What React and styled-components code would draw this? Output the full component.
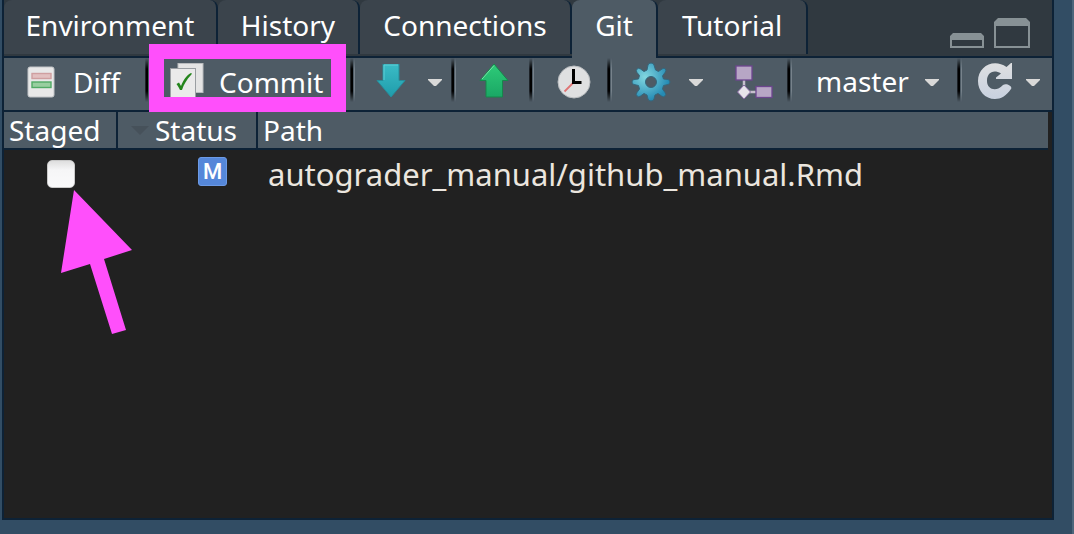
import React, { useState } from "react";
import styled, { createGlobalStyle } from "styled-components";

const line = "#0d2236";
const slate = "#4e5b65";
const pink = "#ff4ffb";

const GlobalStyle = createGlobalStyle`
  *, *::before, *::after { box-sizing: border-box; }
  body {
    margin: 0;
    background: #324d64;
    color: #fff;
    font-family: "Noto Sans", "Open Sans", sans-serif;
    font-size: 28px;
    line-height: 36px;
  }
  button, select { font: inherit; color: inherit; }
`;

const Page = styled.div`
  display: flex;
  min-height: 100vh;
  padding: 0 18px 14px 2px;
  border-right: 2px solid #4d667b;
`;

const Pane = styled.section`
  flex: 1;
  min-width: 0;
  display: flex;
  flex-direction: column;
  border: solid ${line};
  border-width: 0 2px 2px;
  background: #212121;
`;

const TabBar = styled.header`
  display: flex;
  justify-content: space-between;
  height: 58px;
  background: #303940;
  border-bottom: 2px solid ${line};
`;

const TabList = styled.div`
  display: flex;
`;

const Tab = styled.button`
  width: ${(p) => p.$width}px;
  height: ${(p) => (p.$active ? 58 : 54)}px;
  padding: 0 0 2px;
  border: 0;
  border-right: 2px solid ${line};
  border-radius: 8px 8px 0 0;
  background: ${(p) => (p.$active ? slate : "#3b444c")};
  line-height: 50px;
  display: flex;
  justify-content: center;
`;

const WindowControls = styled.div`
  display: flex;
  align-items: flex-end;
  gap: 10px;
  padding: 0 22px 8px 0;
`;

const IconButton = styled.button`
  display: flex;
  padding: 0;
  border: 0;
  background: none;
`;

const Toolbar = styled.div`
  display: flex;
  height: 54px;
  padding-bottom: 4px;
  background: ${slate};
  border-bottom: 2px solid ${line};
`;

const Group = styled.div`
  position: relative;
  flex: none;
  display: flex;
  align-items: center;
  width: ${(p) => p.$width}px;
  padding-left: ${(p) => p.$pad}px;
  gap: ${(p) => p.$gap || 0}px;
`;

const Separator = styled.span`
  flex: none;
  width: 6px;
  height: 44px;
  background: linear-gradient(90deg, #1c2126 0 1px, #000 1px 3px, ${slate} 3px 4px, #77828b 4px 5px, ${slate} 5px);
  mask-image: linear-gradient(transparent, #000 25%, #000 75%, transparent);
`;

const ToolButton = styled.button`
  display: flex;
  align-items: center;
  gap: ${(p) => p.$gap || 0}px;
  padding: 0;
  border: 0;
  background: none;
  line-height: 34px;
`;

const Highlight = styled.span`
  position: absolute;
  z-index: 2;
  inset: -14px 4px -6px -2px;
  border: 15px solid ${pink};
  pointer-events: none;
`;

const BranchSelect = styled.select`
  appearance: none;
  width: 96px;
  padding: 0 0 2px;
  border: 0;
  background: none;
`;

const FileTable = styled.table`
  width: calc(100% - 4px);
  table-layout: fixed;
  border-collapse: separate;
  border-spacing: 0;
`;

const Head = styled.th`
  width: ${(p) => p.$width || "auto"};
  height: 38px;
  padding: 0 0 0 ${(p) => p.$pad}px;
  background: ${slate};
  border-bottom: 2px solid ${line};
  border-right: ${(p) => (p.$width ? `2px solid ${line}` : "0")};
  font-weight: 400;
  text-align: left;
`;

const HeadLabel = styled.span`
  display: flex;
  align-items: center;
  gap: 6px;
`;

const Cell = styled.td`
  position: relative;
  height: 48px;
  padding: 0 0 0 ${(p) => p.$pad}px;
  color: #ebe6df;
  font-size: 31px;
  vertical-align: middle;
`;

const Check = styled.input`
  appearance: none;
  display: block;
  width: 28px;
  height: 28px;
  margin: 0;
  border: 1px solid #c9c9c9;
  border-radius: 5px;
  background: linear-gradient(#dedede, #f6f6f7 35%, #fafafb);
  &:checked { background: #5588dc; }
`;

const Badge = styled.span`
  display: block;
  width: 29px;
  height: 29px;
  margin-bottom: 6px;
  border: 1px solid #6c9ae6;
  border-radius: 3px;
  background: #5587d9;
  color: #fff;
  font-family: Roboto, sans-serif;
  font-size: 22px;
  font-weight: 500;
  line-height: 27px;
  text-align: center;
`;

const Pointer = styled.svg`
  position: absolute;
  z-index: 1;
  left: 57px;
  top: 40px;
  pointer-events: none;
`;

const Caret = () => (
  <svg width="14" height="7" viewBox="0 0 14 7" aria-hidden="true">
    <path d="M0 0H14V1L8 7H6L0 1Z" fill="#d9d9d8" />
  </svg>
);

const DiffIcon = () => (
  <svg width="28" height="32" viewBox="0 0 28 32">
    <rect x="1" y="1" width="26" height="30" rx="2" fill="#e8e8e8" stroke="#c2c5c8" />
    <rect x="5" y="7.500" width="19" height="5" fill="#e2c0c0" stroke="#cf9fa0" strokeWidth="1.400" />
    <rect x="5" y="16" width="19" height="5.500" fill="#98ce9f" stroke="#51aa65" strokeWidth="1.400" />
  </svg>
);

const CommitIcon = () => (
  <svg width="34" height="38" viewBox="0 0 34 38">
    <rect x="8" y="0.500" width="25" height="29" fill="#e4e4e4" stroke="#b9bcbe" />
    <rect x="0.500" y="5.500" width="25" height="29" fill="#eaeaea" stroke="#9a9ea2" />
    <path d="M6.500 21L9 19.500L11 23C13.500 17 16 12.500 21 10C22 10 22 11 21 12C16.500 17 14 21 12 27H10C9 25 8 23 6.500 21Z" fill="#24851c" />
  </svg>
);

const ArrowIcon = ({ up }) => (
  <svg width="30" height="36" viewBox="0 0 30 36">
    <defs>
      <linearGradient id={up ? "push" : "pull"} x1="0" y1="0" x2="0" y2="1">
        <stop offset="0" stopColor={up ? "#2ecb78" : "#3bbcc6"} />
        <stop offset="1" stopColor={up ? "#1aa765" : "#1f9cab"} />
      </linearGradient>
    </defs>
    {up ? (
      <>
        <path d="M15 0L29 16.500H23.500V33H7V16.500H1Z" fill="url(#push)" stroke="#16874b" />
        <path d="M3 15L15 1.500" stroke="#7be2a8" />
      </>
    ) : (
      <>
        <path d="M7 0H23V16.500H29L15 33L1 16.500H7Z" fill="url(#pull)" stroke="#278c9a" />
        <path d="M8 16V1H22" fill="none" stroke="#5fd0d7" />
      </>
    )}
  </svg>
);

const ClockIcon = () => (
  <svg width="34" height="34" viewBox="0 0 34 34">
    <circle cx="17" cy="17" r="16" fill="#dfe0e1" stroke="#b9bcbf" />
    <path d="M16 18L7.500 26.500" stroke="#df7474" strokeWidth="1.800" />
    <path d="M16.500 4V17.500H24.500" fill="none" stroke="#000" strokeWidth="3" />
  </svg>
);

const gearOutline =
  "M17 3Q17.500 1 20 1Q22.500 1 23 3L24.500 8L27.500 9.500L31 7Q33 5.500 34.500 7Q35.500 8.500 34 10.500L31.500 14L32.500 17L37 17.500Q39 18 39 20Q39 22 37 22.500L32.500 23.500L31.500 27L34 30.500Q35.500 32.500 34 34Q32.500 35.500 30.500 34L27 31.500L24 33L23 37Q22.500 39 20 39Q17.500 39 17 37L16 33L13 31.500L9.500 34Q7.500 35.500 6 34Q4.500 32.500 6 30.500L8.500 27L7.500 23.500L3 22.500Q1 22 1 20Q1 18 3 17.500L7.500 17L8.500 13.500L6 10.500Q4.500 8.500 6 7Q7.500 5.500 9.500 7L13 9.500L16 8Z";

const GearIcon = () => (
  <svg width="40" height="40" viewBox="0 0 40 40">
    <defs>
      <radialGradient id="gear" gradientUnits="userSpaceOnUse" cx="14" cy="15" r="24">
        <stop offset="0" stopColor="#82d7e0" />
        <stop offset="1" stopColor="#258bb4" />
      </radialGradient>
    </defs>
    <path
      d={`${gearOutline}M20 14.500A5.500 5.500 0 1 0 20 25.500A5.500 5.500 0 1 0 20 14.500Z`}
      fill="url(#gear)"
      fillRule="evenodd"
      stroke="#34677d"
    />
  </svg>
);

const BranchIcon = () => (
  <svg width="38" height="35" viewBox="0 0 38 35">
    <path d="M9 14V27H22" fill="none" stroke="#c6c0cd" strokeWidth="2.500" />
    <g fill="#b7a6c5" stroke="#6d468f" strokeWidth="1.300">
      <rect x="1" y="1" width="16" height="14" />
      <rect x="21" y="21.500" width="16" height="11" />
    </g>
    <path d="M9 20L15.500 27L9 34L2.500 27Z" fill="#e7e4ea" stroke="#8567a0" />
  </svg>
);

const RefreshIcon = () => (
  <svg width="36" height="40" viewBox="0 0 36 40">
    <defs>
      <linearGradient id="reload" x1="0" y1="0" x2="0" y2="1">
        <stop offset="0" stopColor="#dedfe1" />
        <stop offset="1" stopColor="#c8d1df" />
      </linearGradient>
    </defs>
    <path
      d="M35 1V17H19V15.500L24 11.500C16 7 10 11 10 19C10 28 20 30 26 23C29 20.500 36 24 34 27C29 34 24 37 18 37C8 37 1 29 1 19C1 4 17-4 29.500 5L34 1Z"
      fill="url(#reload)"
    />
  </svg>
);

const MinimizeIcon = () => (
  <svg width="34" height="15" viewBox="0 0 34 15">
    <path d="M3 0H31L34 3V15H0V3ZM2 7V13H32V7Z" fill="#879195" fillRule="evenodd" />
  </svg>
);

const MaximizeIcon = () => (
  <svg width="36" height="30" viewBox="0 0 36 30">
    <path d="M4 0H32L36 4V30H0V4ZM2 8V28H34V8Z" fill="#879195" fillRule="evenodd" />
  </svg>
);

const tabs = [
  { name: "Environment", width: 214 },
  { name: "History", width: 142 },
  { name: "Connections", width: 212 },
  { name: "Git", width: 86 },
  { name: "Tutorial", width: 150 },
];

export default function App() {
  const [staged, setStaged] = useState(false);
  return (
    <>
      <GlobalStyle />
      <Page>
        <Pane>
          <TabBar>
            <TabList role="tablist">
              {tabs.map((t) => (
                <Tab key={t.name} role="tab" aria-selected={t.name === "Git"} $active={t.name === "Git"} $width={t.width}>
                  {t.name}
                </Tab>
              ))}
            </TabList>
            <WindowControls>
              <IconButton aria-label="Minimize"><MinimizeIcon /></IconButton>
              <IconButton aria-label="Maximize"><MaximizeIcon /></IconButton>
            </WindowControls>
          </TabBar>

          <Toolbar role="toolbar" aria-label="Git">
            <Group $width={141} $pad={23}>
              <ToolButton $gap={18}><DiffIcon />Diff</ToolButton>
            </Group>
            <Separator />
            <Group $width={199} $pad={19}>
              <ToolButton $gap={15}><CommitIcon />Commit</ToolButton>
              <Highlight />
            </Group>
            <Separator />
            <Group $width={95} $pad={20} $gap={22}>
              <ToolButton aria-label="Pull"><ArrowIcon /></ToolButton>
              <ToolButton aria-label="Pull options"><Caret /></ToolButton>
            </Group>
            <Separator />
            <Group $width={72} $pad={22}>
              <ToolButton aria-label="Push"><ArrowIcon up /></ToolButton>
            </Group>
            <Separator />
            <Group $width={72} $pad={22}>
              <ToolButton aria-label="History"><ClockIcon /></ToolButton>
            </Group>
            <Separator />
            <Group $width={174} $pad={18}>
              <ToolButton aria-label="More actions" $gap={18}><GearIcon /><Caret /></ToolButton>
              <Group as="span" $width={70} $pad={32}>
                <ToolButton aria-label="New branch"><BranchIcon /></ToolButton>
              </Group>
            </Group>
            <Separator />
            <Group $width={164} $pad={23} $gap={13}>
              <BranchSelect aria-label="Branch" defaultValue="master">
                <option>master</option>
              </BranchSelect>
              <Caret />
            </Group>
            <Separator />
            <Group $width={89} $pad={14} $gap={13}>
              <ToolButton aria-label="Refresh"><RefreshIcon /></ToolButton>
              <ToolButton aria-label="Refresh options"><Caret /></ToolButton>
            </Group>
          </Toolbar>

          <FileTable>
            <thead>
              <tr>
                <Head $width="114px" $pad={5}>Staged</Head>
                <Head $width="140px" $pad={13}>
                  <HeadLabel>
                    <svg width="18" height="9" viewBox="0 0 18 9" aria-hidden="true">
                      <path d="M0 0H18L9 9Z" fill="#46515a" />
                    </svg>
                    Status
                  </HeadLabel>
                </Head>
                <Head $pad={5}>Path</Head>
              </tr>
            </thead>
            <tbody>
              <tr>
                <Cell $pad={43}>
                  <Check
                    type="checkbox"
                    aria-label="Stage autograder_manual/github_manual.Rmd"
                    checked={staged}
                    onChange={(e) => setStaged(e.target.checked)}
                  />
                  <Pointer width="72" height="145" viewBox="0 0 72 145" aria-hidden="true">
                    <path d="M13 0L71 60L43 69L65 140L51 144L29 74L0 83Z" fill={pink} />
                  </Pointer>
                </Cell>
                <Cell $pad={80}><Badge>M</Badge></Cell>
                <Cell $pad={10}>autograder_manual/github_manual.Rmd</Cell>
              </tr>
            </tbody>
          </FileTable>
        </Pane>
      </Page>
    </>
  );
}
